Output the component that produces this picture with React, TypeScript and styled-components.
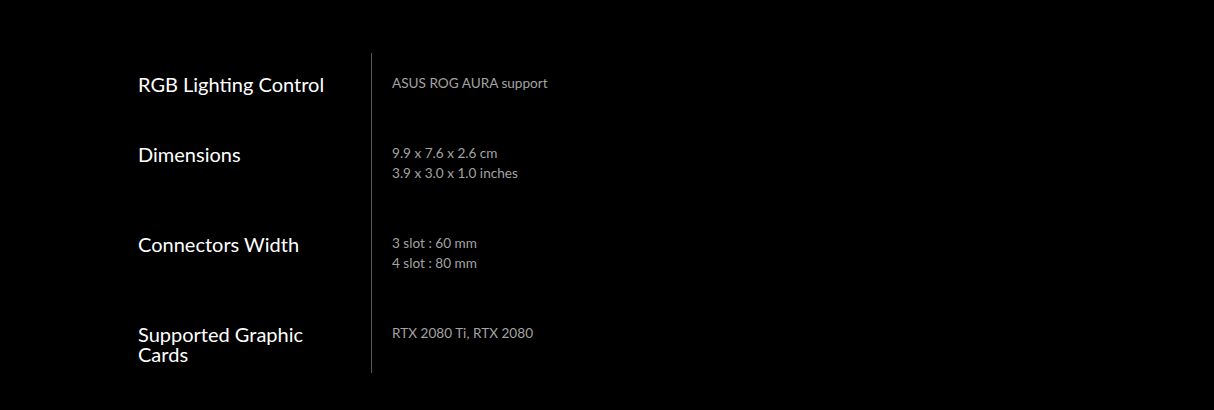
import React from "react";
import styled, { createGlobalStyle } from "styled-components";

const Global = createGlobalStyle`
  html, body { margin: 0; padding: 0; background: #000; }
  body { font-family: "Segoe UI", Lato, "Noto Sans", sans-serif; }
`;

const Page = styled.div`
  background: #000;
  min-height: 410px;
  padding: 53px 0 0 138px;
  box-sizing: border-box;
`;

const Table = styled.div`
  display: flex;
  flex-direction: column;
  width: 700px;
`;

const Row = styled.div`
  display: flex;
  align-items: stretch;
`;

const Label = styled.div`
  width: 233px;
  flex-shrink: 0;
  box-sizing: border-box;
  padding: 21px 20px 0 0;
  color: #fff;
  font-size: 20px;
  line-height: 20px;
`;

const LabelText = styled.div`
  height: 20px;
  overflow: visible;
`;

const Value = styled.div`
  flex: 1;
  border-left: 1px solid #595959;
  padding: 20px 20px 30px 20px;
  color: #a3a3a3;
  font-size: 13.6px;
  line-height: 20px;
`;

const Line = styled.div``;

const specs = [
  { label: "RGB Lighting Control", values: ["ASUS ROG AURA support"] },
  { label: "Dimensions", values: ["9.9 x 7.6 x 2.6 cm", "3.9 x 3.0 x 1.0 inches"] },
  { label: "Connectors Width", values: ["3 slot : 60 mm", "4 slot : 80 mm"] },
  { label: "Supported Graphic Cards", values: ["RTX 2080 Ti, RTX 2080"] },
];

export default function App() {
  return (
    <>
      <Global />
      <Page>
        <Table>
          {specs.map((s) => (
            <Row key={s.label}>
              <Label>
                <LabelText>{s.label}</LabelText>
              </Label>
              <Value>
                {s.values.map((v) => (
                  <Line key={v}>{v}</Line>
                ))}
              </Value>
            </Row>
          ))}
        </Table>
      </Page>
    </>
  );
}
